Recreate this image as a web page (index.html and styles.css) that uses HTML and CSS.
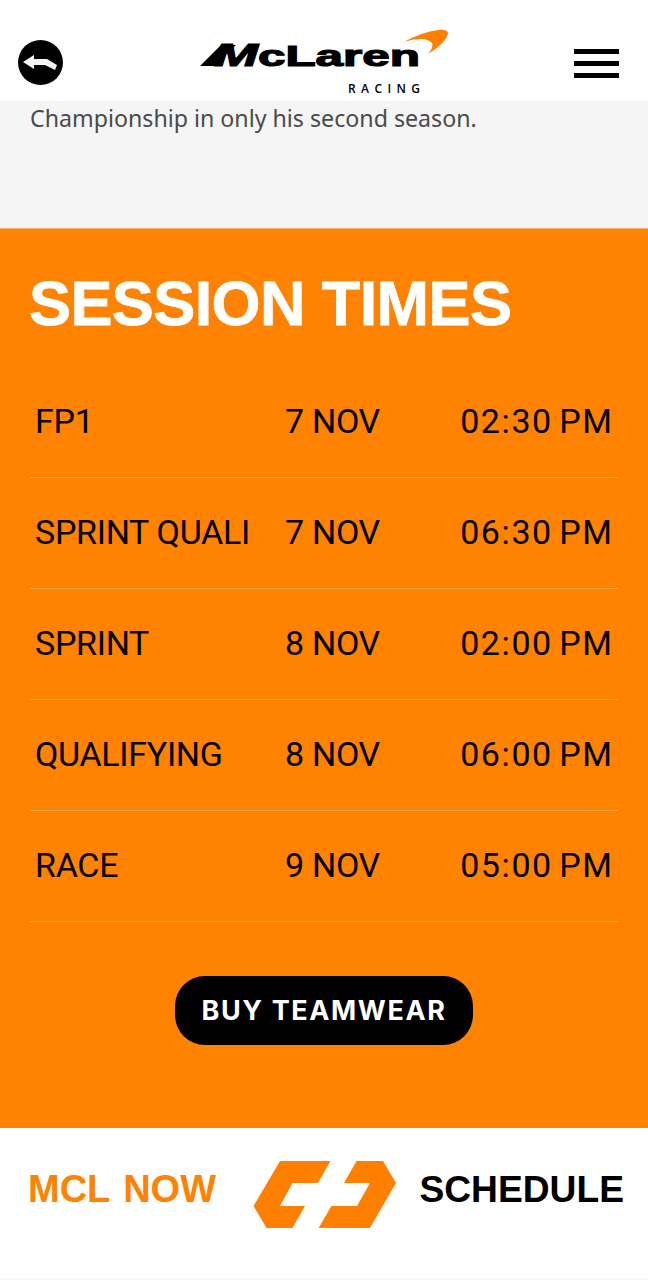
FILE: index.html
```html
<!DOCTYPE html>
<html lang="en">

<head>
    <meta charset="UTF-8">
    <meta name="viewport" content="width=device-width, initial-scale=1.0">
    <title>Session Times</title>
    <link rel="stylesheet" href="styles.css">
</head>

<body>
    <header class="top-bar">
        <div class="back-btn">
            <svg width="45" height="45" viewBox="0 0 45 45">
                <circle cx="22.5" cy="22.5" r="22.5" fill="#000"></circle>
                <path d="M5 22 L16 15 L16 19 L29 19 L39 25 L37 30 L27 25 L16 25 L16 29 Z" fill="#f4f4f4"></path>
            </svg>
        </div>
        <div class="logo">
            <svg width="250" height="70" viewBox="0 0 250 70">
                <path d="M0 38 L15 38 L36 17 L21 17 Z" fill="#000"></path>
                <text class="logo-word" x="14" y="38" textLength="206" lengthAdjust="spacingAndGlyphs"><tspan class="logo-m">M</tspan>cLaren</text>
                <path d="M204 14 Q222 4 238 2 Q247 1 248 5 Q247 14 228 26 Q234 19 232 15 Q228 11 221 11 Q212 11 204 14 Z" fill="#ff8000"></path>
                <text class="logo-sub" x="148" y="65">RACING</text>
            </svg>
        </div>
        <div class="menu-btn">
            <span></span>
            <span></span>
            <span></span>
        </div>
    </header>

    <section class="intro">
        <p>Championship in only his second season.</p>
    </section>

    <section class="sessions">
        <h2>SESSION TIMES</h2>
        <ul class="session-list">
            <li class="session"><span>FP1</span><span>7 NOV</span><span>02:30 PM</span></li>
            <li class="session"><span>SPRINT QUALI</span><span>7 NOV</span><span>06:30 PM</span></li>
            <li class="session"><span>SPRINT</span><span>8 NOV</span><span>02:00 PM</span></li>
            <li class="session"><span>QUALIFYING</span><span>8 NOV</span><span>06:00 PM</span></li>
            <li class="session"><span>RACE</span><span>9 NOV</span><span>05:00 PM</span></li>
        </ul>
        <a class="buy-btn">BUY TEAMWEAR</a>
    </section>

    <nav class="bottom-bar">
        <span class="nav-left">MCL NOW</span>
        <svg class="nav-icon" width="144" height="68" viewBox="0 0 144 68">
            <path d="M27 0 L77.5 0 L65 22 L39.5 22 L27 45 L52 45 L39.5 67 L13.5 67 L0.5 45 Z" fill="#ff8000"></path>
            <path d="M103.6 0 L130 0 L143 22 L117 67 L65.6 67 L78.4 45 L104 45 L117 22 L91 22 Z" fill="#ff8000"></path>
        </svg>
        <span class="nav-right">SCHEDULE</span>
    </nav>
</body>

</html>
```

FILE: styles.css
```css
* {
    margin: 0;
    padding: 0;
    box-sizing: border-box;
}

body {
    background-color: #fff;
    font-family: "Liberation Sans", Arial, sans-serif;
    width: 648px;
    height: 1280px;
    overflow: hidden;
}

li {
    list-style: none;
}

.top-bar {
    height: 101px;
    background-color: #fff;
    display: flex;
    align-items: flex-start;
    padding: 28px 29px 0 18px;
}

.back-btn {
    margin-top: 12px;
    height: 45px;
}

.logo {
    height: 70px;
    margin-left: 137px;
}

.logo-word {
    font-family: "Liberation Sans", sans-serif;
    font-size: 30px;
    font-weight: 700;
    fill: #000;
    stroke: #000;
    stroke-width: 1.2px;
}

.logo-m {
    font-size: 32px;
    font-style: italic;
}

.logo-sub {
    font-family: "Open Sans", sans-serif;
    font-size: 12px;
    font-weight: 600;
    letter-spacing: 5.4px;
    fill: #000;
}

.menu-btn {
    width: 45px;
    margin-top: 21px;
    margin-left: auto;
    display: flex;
    flex-direction: column;
    gap: 7px;
}

.menu-btn span {
    display: block;
    height: 5px;
    background-color: #000;
}

.intro {
    height: 127px;
    background-color: #f5f5f5;
    padding: 2px 30px 0;
}

.intro p {
    font-family: "Noto Sans", sans-serif;
    font-size: 23.2px;
    line-height: 31px;
    color: #4a4a4a;
}

.sessions {
    height: 900px;
    background-color: #ff8200;
    border-top: 1px solid #f9b772;
    padding: 41px 30px 0;
}

.sessions h2 {
    font-family: "Liberation Sans", sans-serif;
    font-size: 63px;
    line-height: 66px;
    font-weight: 700;
    color: #fff;
    letter-spacing: -0.6px;
    -webkit-text-stroke: 0.8px #fff;
    margin-left: -1px;
    margin-bottom: 31px;
}

.session {
    height: 111px;
    display: grid;
    grid-template-columns: 250px 156px 1fr;
    align-items: center;
    padding: 0 6px 2px 5px;
    border-bottom: 1px solid rgba(255, 255, 255, 0.28);
    font-family: Roboto, sans-serif;
    font-size: 34px;
    letter-spacing: -0.3px;
    color: #000;
}

.session span:last-child {
    text-align: right;
    letter-spacing: 1.6px;
    word-spacing: -3.6px;
    margin-right: -1.6px;
}

.buy-btn {
    display: block;
    width: 298px;
    height: 69px;
    margin: 54px auto 0;
    border-radius: 30px;
    background-color: #000;
    color: #fff;
    font-family: Inter, sans-serif;
    font-size: 27px;
    font-weight: 700;
    line-height: 69px;
    text-align: center;
    letter-spacing: 1.6px;
}

.bottom-bar {
    height: 152px;
    background-color: #fff;
    border-bottom: 2px solid #f8f8f8;
    display: flex;
    align-items: flex-start;
    padding: 33px 24px 0 28px;
}

.nav-icon {
    margin-left: 37px;
}

.nav-left,
.nav-right {
    line-height: 56px;
    font-weight: 700;
}

.nav-left {
    color: #ff8200;
    font-size: 38px;
    word-spacing: 3px;
}

.nav-right {
    color: #000;
    font-size: 37.2px;
    margin-left: auto;
}
```
